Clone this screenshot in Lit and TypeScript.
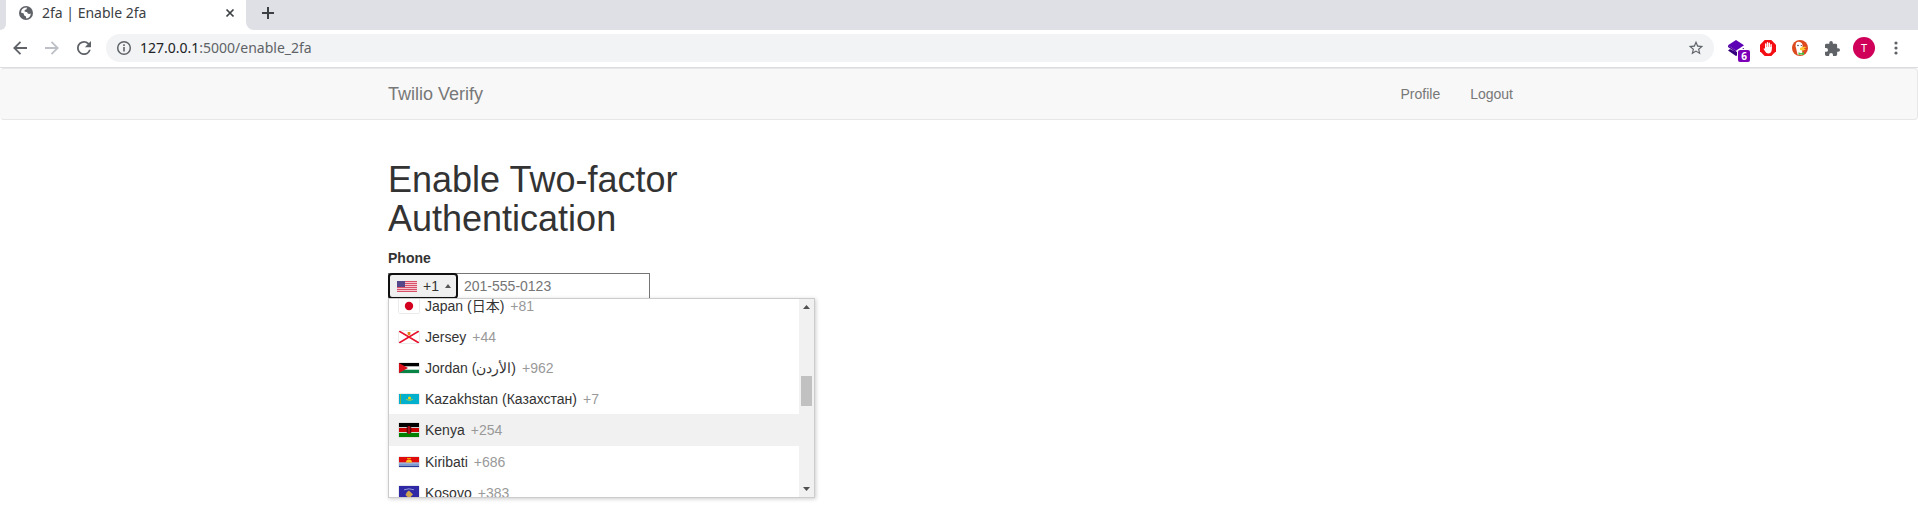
import { LitElement, html, css, svg } from "lit";
import { customElement, property, query } from "lit/decorators.js";

const flags: Record<string, { h: number; art: unknown }> = {
  us: { h: 11, art: svg`<rect width="20" height="11" fill="#f3c9cf"/><path d="M0 .5h20M0 2.5h20M0 4.5h20M0 6.5h20M0 8.5h20M0 10.5h20" stroke="#d8506a"/><rect width="8" height="6" fill="#54488a"/>` },
  jp: { h: 14, art: svg`<rect width="20" height="14" fill="#fff"/><circle cx="10" cy="7" r="4.2" fill="#d30020"/>` },
  je: { h: 12, art: svg`<rect width="20" height="12" fill="#fff"/><path d="M0 0 20 12M20 0 0 12" stroke="#e8112d" stroke-width="1.6"/><path d="M8.6 1h2.8v2.4L10 4.8 8.6 3.4z" fill="#e0851c"/>` },
  jo: { h: 10, art: svg`<rect width="20" height="10" fill="#fff"/><rect width="20" height="3.3" fill="#000"/><rect y="6.7" width="20" height="3.3" fill="#0a8446"/><path d="M0 0 9 5 0 10z" fill="#d9101c"/>` },
  kz: { h: 10, art: svg`<rect width="20" height="10" fill="#00b0cc"/><path d="M1.5 0v10" stroke="#7fae3a"/><circle cx="10.5" cy="4" r="1.5" fill="#ffd800"/><path d="M7 5.4q3.5 2.2 7 0" stroke="#c8ca30" stroke-width=".8" fill="none"/>` },
  ke: { h: 14, art: svg`<rect width="20" height="14" fill="#fff"/><rect width="20" height="4.2" fill="#000"/><rect y="5" width="20" height="4" fill="#c80000"/><rect y="9.8" width="20" height="4.2" fill="#008000"/><ellipse cx="10" cy="7" rx="2.2" ry="4" fill="#a90d18"/><path d="M8.2 4v6M11.8 4v6" stroke="#200" stroke-width=".7"/>` },
  ki: { h: 10, art: svg`<rect width="20" height="10" fill="#e00c0c"/><rect y="5.5" width="20" height="4.5" fill="#7d9bd0"/><path d="M0 9.5h20" stroke="#2b3f98"/><path d="M0 6h20" stroke="#c6cfe8" stroke-width=".8"/><path d="M7 5.5a3 3 0 0 1 6 0z" fill="#ffc31e"/><path d="M8 1.5h4" stroke="#f5a000"/>` },
  xk: { h: 14, art: svg`<rect width="20" height="14" fill="#3029a5"/><path d="M5 3.8q5-2 10 0" stroke="#8f95d8" fill="none"/><path d="M10 4.5 14 8.5 10 12.5 6.5 9 8 6z" fill="#d0a650"/>` },
};

const countries = [
  { code: "jp", name: "Japan (日本)", dial: "+81" },
  { code: "je", name: "Jersey", dial: "+44" },
  { code: "jo", name: "Jordan (\u202bالأردن\u202c\u200e)", dial: "+962" },
  { code: "kz", name: "Kazakhstan (Казахстан)", dial: "+7" },
  { code: "ke", name: "Kenya", dial: "+254" },
  { code: "ki", name: "Kiribati", dial: "+686" },
  { code: "xk", name: "Kosovo", dial: "+383" },
];

const flag = (code: string) => html`<svg class="flag" width="20" height=${flags[code].h} viewBox="0 0 20 ${flags[code].h}" aria-hidden="true">${flags[code].art}</svg>`;

@customElement("browser-chrome")
class BrowserChrome extends LitElement {
  static styles = css`
    :host { display: block; font-family: "Noto Sans", sans-serif; font-size: 14px; color: #3c4043; }
    button { border: 0; padding: 0; background: none; color: #5f6368; display: grid; place-items: center; font: inherit; }
    svg { display: block; }
    .strip { display: flex; height: 30px; background: #dee0e6; }
    .edge { width: 6px; background: #fff; }
    .edge::before, .spare::before { content: ""; display: block; height: 30px; background: #dee0e6; }
    .edge::before { border-bottom-right-radius: 6px; }
    .tab { display: flex; align-items: center; width: 240px; box-sizing: border-box; padding: 0 8px 4px 13px; background: #fff; }
    .title { flex: 1; margin-left: 9px; line-height: 20px; }
    .tab button { width: 16px; height: 16px; color: #3c4043; }
    .spare { flex: 1; background: #fff; position: relative; }
    .spare::before { border-bottom-left-radius: 8px; }
    .new { position: absolute; left: 14px; top: 5px; width: 16px; height: 16px; color: #3c4043; }
    .bar { display: flex; align-items: center; height: 36px; padding: 0 6px 1px 8px; background: #fff; border-bottom: 1px solid #dadce0; }
    .nav { display: flex; gap: 8px; margin-right: 10px; }
    .nav button { width: 24px; height: 24px; }
    .nav .off { color: #bdc1c6; }
    .omni { flex: 1; display: flex; align-items: center; height: 28px; box-sizing: border-box; padding: 0 10px; border-radius: 14px; background: #f1f3f4; color: #5f6368; }
    .url { flex: 1; margin-left: 8px; white-space: nowrap; line-height: 20px; }
    .host { color: #202124; }
    .exts { display: flex; align-items: center; margin-left: 6px; }
    .exts button { width: 32px; height: 28px; }
    .ext { position: relative; }
    .count { position: absolute; left: 18px; top: 16px; width: 12px; height: 12px; border-radius: 2px; background: #7b00b8; box-shadow: 0 0 0 1px #fff; color: #fff; font-size: 10px; line-height: 12px; font-weight: 700; }
    .avatar { width: 22px; height: 22px; border-radius: 50%; background: #d0005a; color: #fff; font-size: 11px; line-height: 22px; }
  `;
  render() {
    return html`
      <div class="strip">
        <span class="edge"></span>
        <div class="tab">
          <svg width="14" height="14" viewBox="0 0 14 14"><circle cx="7" cy="7" r="7" fill="#5f6368"/><path d="M5.5 1.8 8 1.5 7.5 3.2 5.800 4 5.500 5.400 8.200 6.200 8.800 7.600 10.200 8 11.800 7.400A5.500 5.500 0 0 1 7.200 12.400L7 10.500 5 9.300 4.800 7.500 2 6.500A5.500 5.500 0 0 1 5.500 1.800z" fill="#fff"/></svg>
          <span class="title">2fa | Enable 2fa</span>
          <button aria-label="Close tab"><svg width="10" height="10" viewBox="0 0 10 10"><path d="M1.5 1.5 8.5 8.500M8.500 1.500 1.500 8.500" stroke="currentColor" stroke-width="1.7"/></svg></button>
        </div>
        <div class="spare"><button class="new" aria-label="New tab"><svg width="12" height="12" viewBox="0 0 12 12"><path d="M6 0v12M0 6h12" stroke="currentColor" stroke-width="2"/></svg></button></div>
      </div>
      <div class="bar">
        <div class="nav">
          <button aria-label="Back"><svg width="14" height="14" viewBox="0 0 14 14" fill="none" stroke="currentColor" stroke-width="1.8"><path d="M14 7H1.5M7.5.8 1.3 7l6.2 6.2"/></svg></button>
          <button class="off" aria-label="Forward"><svg width="14" height="14" viewBox="0 0 14 14" fill="none" stroke="currentColor" stroke-width="1.8"><path d="M0 7h12.5M6.5.8 12.7 7l-6.2 6.2"/></svg></button>
          <button aria-label="Reload"><svg width="14" height="14" viewBox="4 4 16 16" fill="currentColor"><path d="M17.65 6.35A7.958 7.958 0 0 0 12 4a8 8 0 1 0 7.73 10h-2.08A5.99 5.99 0 0 1 12 18a6 6 0 1 1 0-12c1.66 0 3.14.69 4.22 1.78L13 11h7V4z"/></svg></button>
        </div>
        <div class="omni">
          <svg width="16" height="16" viewBox="0 0 16 16" fill="none" stroke="currentColor" stroke-width="1.5"><circle cx="8" cy="8" r="6.3"/><path d="M8 7v4.500M8 4.300v1.600" stroke-width="1.6"/></svg>
          <span class="url"><span class="host">127.0.0.1</span>:5000/enable_2fa</span>
          <button aria-label="Bookmark"><svg width="16" height="16" viewBox="1 1 22 22" fill="currentColor"><path d="m22 9.24-7.19-.62L12 2 9.190 8.630 2 9.240l5.460 4.730L5.820 21 12 17.270 18.180 21l-1.630-7.030zM12 15.400l-3.760 2.270 1-4.280-3.320-2.880 4.380-.38L12 6.100l1.710 4.040 4.380.38-3.320 2.880 1 4.280z"/></svg></button>
        </div>
        <div class="exts">
          <button class="ext" aria-label="Layers"><svg width="16" height="16" viewBox="0 0 16 16"><path d="M0 10.500 2 9l6 3 8-4v3.500L8 16z" fill="#32007c"/><path d="M8 0 16 5.300 8 10.800 0 5.300z" fill="#5c00b5"/><path d="M0 5.300 8 10.800v1.700L0 7z" fill="#4a0098"/></svg><span class="count">6</span></button>
          <button aria-label="Ad blocker"><svg width="16" height="16" viewBox="0 0 16 16"><path d="M4.700 0h6.600L16 4.700v6.600L11.300 16H4.700L0 11.300V4.700z" fill="#f40d12"/><path d="M5.700 8V4M7.500 8V2.800M9.300 8V3.200M11.100 8V4.800" stroke="#fff" stroke-width="1.400" stroke-linecap="round"/><path d="M5 7h6.800v2.500q-.3 4-3.600 4-2 0-3-2L3.500 8.800q.7-1 1.500 0z" fill="#fff"/></svg></button>
          <button aria-label="Privacy search"><svg width="16" height="16" viewBox="0 0 16 16"><circle cx="8" cy="8" r="8" fill="#de4a20"/><path d="M4 3q1.500-2 4-1 2.500.8 2.700 3.500L10 9l.5 5.500q-2.500 1-5 0L4.500 10 3.500 6z" fill="#fff"/><circle cx="6" cy="5.500" r=".8" fill="#345"/><path d="M8.800 5.500h1" stroke="#345"/><path d="M8 8q3-1.700 7-1l-3.500 1.600 2.500.6q-2.500 2-6 .8z" fill="#fc3"/><path d="M6.500 12.200 9 13.200 12 12v3L9 14.500 6.500 15z" fill="#4cba3c"/></svg></button>
          <button aria-label="Extensions"><svg width="15" height="15" viewBox="2 1 21 21" fill="currentColor"><path d="M20.500 11H19V7a2 2 0 0 0-2-2h-4V3.500a2.500 2.500 0 0 0-5 0V5H4a2 2 0 0 0-2 2v3.800h1.500a2.700 2.700 0 0 1 0 5.400H2V20a2 2 0 0 0 2 2h3.800v-1.500a2.700 2.700 0 0 1 5.400 0V22H17a2 2 0 0 0 2-2v-4h1.500a2.500 2.500 0 0 0 0-5z"/></svg></button>
          <button aria-label="Account"><span class="avatar">T</span></button>
          <button aria-label="Menu"><svg width="4" height="14" viewBox="0 0 4 14" fill="currentColor"><circle cx="2" cy="2" r="1.6"/><circle cx="2" cy="7" r="1.6"/><circle cx="2" cy="12" r="1.6"/></svg></button>
        </div>
      </div>`;
  }
}

@customElement("phone-field")
class PhoneField extends LitElement {
  @property() selected = "ke";
  @query(".list") list!: HTMLElement;
  static styles = css`
    :host { display: block; font-size: 14px; line-height: 20px; }
    label { display: block; margin-bottom: 5px; font-weight: 700; }
    .flag { display: block; flex: none; }
    .field { position: relative; display: flex; width: 262px; }
    input { flex: 1; min-width: 0; height: 26px; box-sizing: border-box; padding: 1px 2px 1px 75px; border: 1px solid #767676; border-radius: 0; font: inherit; color: #333; background: #fff; }
    input::placeholder { color: #757575; opacity: 1; }
    .country { position: absolute; left: 0; top: 0; width: 70px; height: 26px; box-sizing: border-box; display: flex; align-items: center; gap: 6px; padding: 0 5px 0 7px; border: 2px solid #101010; border-radius: 4px; background: #f0f0f0; font: inherit; color: #333; }
    .up { width: 6px; height: 4px; background: #555; clip-path: polygon(50% 0, 100% 100%, 0 100%); }
    .menu { position: absolute; left: 0; top: 25px; z-index: 1; display: flex; width: 427px; height: 200px; box-sizing: border-box; border: 1px solid #ccc; background: #fff; box-shadow: 1px 1px 4px rgba(0,0,0,.2); }
    .list { flex: 1; margin: 0; padding: 0; list-style: none; overflow: hidden; }
    .item { display: flex; align-items: center; gap: 6px; height: 31px; padding: 0 10px; white-space: nowrap; }
    .item .flag { box-shadow: 0 0 1px 0 #888; }
    .item.on { height: 32px; background: #f1f1f1; }
    .dial { color: #999; }
    .scroll { display: flex; flex-direction: column; align-items: center; width: 15px; background: #f1f1f1; }
    .arrow { width: 7px; height: 4px; margin: 6px 0; background: #505050; clip-path: polygon(50% 0, 100% 100%, 0 100%); }
    .arrow.down { clip-path: polygon(0 0, 100% 0, 50% 100%); }
    .track { flex: 1; display: flex; flex-direction: column; }
    .thumb { width: 11px; flex: 0 0 30px; background: #c1c1c1; }
    .track::before { content: ""; flex: 61; }
    .track::after { content: ""; flex: 75; }
  `;
  firstUpdated() {
    this.list.scrollTop = 9;
  }
  render() {
    return html`
      <label for="phone">Phone</label>
      <div class="field">
        <input id="phone" type="tel" placeholder="201-555-0123" />
        <button class="country" type="button" aria-label="Country code +1" aria-expanded="true">${flag("us")}<span>+1</span><i class="up"></i></button>
        <div class="menu">
          <ul class="list" role="listbox" aria-label="Countries">
            ${countries.map((c) => html`<li class="item ${c.code === this.selected ? "on" : ""}" role="option" aria-selected=${c.code === this.selected}>${flag(c.code)}<span>${c.name}</span><span class="dial">${c.dial}</span></li>`)}
          </ul>
          <div class="scroll" aria-hidden="true"><i class="arrow"></i><div class="track"><div class="thumb"></div></div><i class="arrow down"></i></div>
        </div>
      </div>`;
  }
}

@customElement("app-root")
class AppRoot extends LitElement {
  static styles = css`
    :host { display: block; min-height: 100vh; background: #fff; color: #333; font: 14px/20px "Liberation Sans", "Noto Sans CJK JP", sans-serif; }
    .navbar { border: 1px solid #e7e7e7; border-left-color: #f8f8f8; border-radius: 4px; background: #f8f8f8; margin-bottom: 20px; }
    .wrap { max-width: 1142px; margin: 0 auto; }
    .row { display: flex; align-items: center; height: 50px; }
    a { color: #777; text-decoration: none; }
    .brand { flex: 1; font-size: 18px; }
    .links { display: flex; gap: 30px; padding-right: 17px; }
    .col { max-width: 360px; }
    h1 { margin: 0 0 10px; padding-top: 20px; font-size: 36px; line-height: 39px; font-weight: 500; }
  `;
  render() {
    return html`
      <browser-chrome></browser-chrome>
      <nav class="navbar"><div class="wrap row"><a class="brand" href="#">Twilio Verify</a><div class="links"><a href="#profile">Profile</a><a href="#logout">Logout</a></div></div></nav>
      <main class="wrap"><div class="col"><h1>Enable Two-factor Authentication</h1><phone-field></phone-field></div></main>`;
  }
}
